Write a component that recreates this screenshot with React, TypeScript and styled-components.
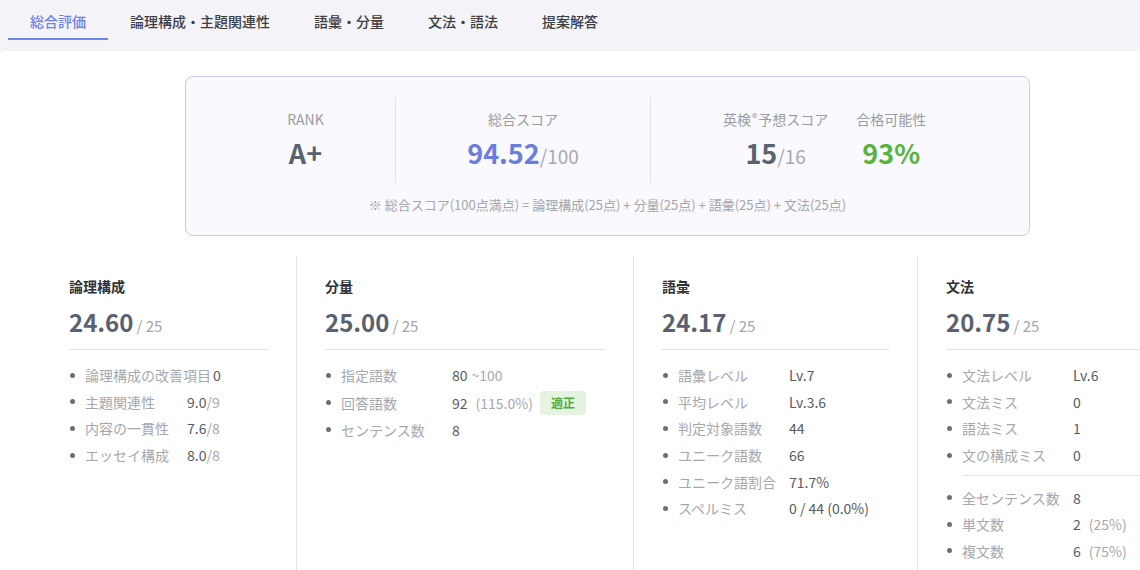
import React from "react";
import styled, { createGlobalStyle } from "styled-components";

const Global = createGlobalStyle`
  html, body { margin: 0; padding: 0; background: #f3f3f8; }
  body {
    font-family: "Noto Sans CJK JP", "Noto Sans", sans-serif;
    color: #333;
    overflow: hidden;
    width: 1140px;
    height: 570px;
  }
  * { box-sizing: border-box; }
`;

const Page = styled.div`
  display: flex;
  flex-direction: column;
  width: 1300px;
`;

const TabBar = styled.nav`
  display: flex;
  height: 51px;
  padding-left: 8px;
  background: #f3f3f8;
`;

const Tab = styled.div<{ $active?: boolean }>`
  height: 40px;
  padding: 11px 22px 0;
  font-size: 14px;
  line-height: 20px;
  font-weight: 500;
  color: ${(p) => (p.$active ? "#6d82e6" : "#3d3f45")};
  border-bottom: 2px solid ${(p) => (p.$active ? "#6d82e6" : "transparent")};
  white-space: nowrap;
`;

const Main = styled.main`
  background: #fff;
  border-top-left-radius: 4px;
  padding: 25px 0 0 41px;
  display: flex;
  flex-direction: column;
  min-height: 560px;
`;

const SummaryCard = styled.section`
  width: 845px;
  margin-left: 144px;
  border: 1px solid #c9cbf3;
  border-radius: 8px;
  background: #f9f9fe;
  padding: 20px 0 21px;
  display: flex;
  flex-direction: column;
  align-items: center;
`;

const SummaryRow = styled.div`
  display: flex;
  width: 100%;
  height: 86px;
`;

const SummarySection = styled.div<{ $width?: number; $padLeft?: number; $divider?: boolean }>`
  display: flex;
  justify-content: ${(p) => (p.$padLeft && p.$width === undefined ? "flex-start" : "center")};
  gap: 28px;
  ${(p) => (p.$width !== undefined ? `width: ${p.$width}px;` : "flex: 1;")}
  padding-left: ${(p) => p.$padLeft ?? 0}px;
  border-left: ${(p) => (p.$divider ? "1px solid #e2e2f4" : "none")};
`;

const Stat = styled.div`
  display: flex;
  flex-direction: column;
  align-items: center;
  padding-top: 12px;
`;

const StatLabel = styled.div`
  font-size: 14px;
  line-height: 20px;
  color: #9a9ca3;
  white-space: nowrap;
  sup {
    font-size: 11px;
    line-height: 0;
    vertical-align: 3px;
    margin: 0 1px;
  }
`;

const StatValue = styled.div<{ $color?: string }>`
  margin-top: 6px;
  font-size: 27px;
  line-height: 36px;
  height: 36px;
  font-weight: 700;
  color: ${(p) => p.$color ?? "#596270"};
  white-space: nowrap;
`;

const StatOf = styled.span`
  font-size: 19px;
  line-height: 1;
  font-weight: 400;
  color: #a8aab0;
`;

const Footnote = styled.div`
  margin-top: 13px;
  font-size: 13px;
  line-height: 18px;
  color: #a4a6ac;
`;

const Columns = styled.div`
  display: flex;
  margin-top: 20px;
  align-items: stretch;
`;

const Column = styled.section<{ $width: number; $divider?: boolean }>`
  width: ${(p) => p.$width}px;
  flex: none;
  padding: 20px 28px 16px;
  border-left: ${(p) => (p.$divider ? "1px solid #e3e3e6" : "none")};
`;

const ColTitle = styled.h3`
  margin: 0;
  font-size: 14px;
  line-height: 20px;
  font-weight: 700;
  color: #2f3237;
`;

const ColScore = styled.div`
  margin-top: 8px;
  font-size: 24px;
  line-height: 36px;
  height: 36px;
  font-weight: 700;
  color: #596270;
  white-space: nowrap;
`;

const ColMax = styled.span`
  font-size: 15px;
  line-height: 1;
  font-weight: 400;
  color: #a4a6ac;
  margin-left: 3px;
`;

const Rule = styled.hr`
  border: none;
  border-top: 1px solid #e3e3e6;
  margin: 9px 0 0;
`;

const List = styled.ul`
  list-style: none;
  margin: 12px 0 0;
  padding: 0;
`;

const SubRule = styled.li`
  border-top: 1px solid #e3e3e6;
  margin: 7px 0 8px 17px;
`;

const Item = styled.li`
  display: flex;
  align-items: center;
  min-height: 26.6px;
  font-size: 14px;
  line-height: 20px;
  white-space: nowrap;
`;

const Dot = styled.span`
  width: 5px;
  height: 5px;
  border-radius: 50%;
  background: #6b7078;
  margin: 0 10px 0 1px;
  flex: none;
`;

const Label = styled.span<{ $min: number }>`
  min-width: ${(p) => p.$min}px;
  color: #a6a8ae;
  margin-right: 2px;
`;

const Value = styled.span`
  color: #575c63;
`;

const Sub = styled.span<{ $gap?: number }>`
  color: #a6a8ae;
  margin-left: ${(p) => p.$gap ?? 0}px;
`;

const Badge = styled.span`
  margin: 2px 0 2px 7px;
  height: 24px;
  padding: 0 11px;
  display: inline-flex;
  align-items: center;
  border-radius: 4px;
  background: #e4f4e0;
  color: #52ad3c;
  font-size: 12px;
  font-weight: 700;
`;

type Row = { label: string; value: string; sub?: string; subGap?: number; badge?: string };

type ColData = {
  title: string;
  score: string;
  width: number;
  labelMin: number;
  divider?: boolean;
  rows: Row[];
  extra?: Row[];
};

const columns: ColData[] = [
  {
    title: "論理構成",
    score: "24.60",
    width: 255,
    labelMin: 100,
    rows: [
      { label: "論理構成の改善項目", value: "0" },
      { label: "主題関連性", value: "9.0", sub: "/9" },
      { label: "内容の一貫性", value: "7.6", sub: "/8" },
      { label: "エッセイ構成", value: "8.0", sub: "/8" },
    ],
  },
  {
    title: "分量",
    score: "25.00",
    width: 337,
    labelMin: 109,
    divider: true,
    rows: [
      { label: "指定語数", value: "80", sub: "~100", subGap: 4 },
      { label: "回答語数", value: "92", sub: "(115.0%)", subGap: 8, badge: "適正" },
      { label: "センテンス数", value: "8" },
    ],
  },
  {
    title: "語彙",
    score: "24.17",
    width: 284,
    labelMin: 109,
    divider: true,
    rows: [
      { label: "語彙レベル", value: "Lv.7" },
      { label: "平均レベル", value: "Lv.3.6" },
      { label: "判定対象語数", value: "44" },
      { label: "ユニーク語数", value: "66" },
      { label: "ユニーク語割合", value: "71.7%" },
      { label: "スペルミス", value: "0 / 44 (0.0%)" },
    ],
  },
  {
    title: "文法",
    score: "20.75",
    width: 300,
    labelMin: 109,
    divider: true,
    rows: [
      { label: "文法レベル", value: "Lv.6" },
      { label: "文法ミス", value: "0" },
      { label: "語法ミス", value: "1" },
      { label: "文の構成ミス", value: "0" },
    ],
    extra: [
      { label: "全センテンス数", value: "8" },
      { label: "単文数", value: "2", sub: "(25%)", subGap: 8 },
      { label: "複文数", value: "6", sub: "(75%)", subGap: 8 },
    ],
  },
];

const tabs = ["総合評価", "論理構成・主題関連性", "語彙・分量", "文法・語法", "提案解答"];

function renderRow(r: Row, labelMin: number, key: string) {
  return (
    <Item key={key}>
      <Dot />
      <Label $min={labelMin}>{r.label}</Label>
      <Value>{r.value}</Value>
      {r.sub && <Sub $gap={r.subGap}>{r.sub}</Sub>}
      {r.badge && <Badge>{r.badge}</Badge>}
    </Item>
  );
}

export default function App() {
  return (
    <>
      <Global />
      <Page>
        <TabBar>
          {tabs.map((t, i) => (
            <Tab key={t} $active={i === 0}>
              {t}
            </Tab>
          ))}
        </TabBar>
        <Main>
          <SummaryCard>
            <SummaryRow>
              <SummarySection $width={209} $padLeft={30}>
                <Stat>
                  <StatLabel>RANK</StatLabel>
                  <StatValue>A+</StatValue>
                </Stat>
              </SummarySection>
              <SummarySection $width={255} $divider>
                <Stat>
                  <StatLabel>総合スコア</StatLabel>
                  <StatValue $color="#6b7de0">
                    94.52<StatOf>/100</StatOf>
                  </StatValue>
                </Stat>
              </SummarySection>
              <SummarySection $padLeft={72} $divider>
                <Stat>
                  <StatLabel>
                    英検<sup>®</sup>予想スコア
                  </StatLabel>
                  <StatValue>
                    15<StatOf>/16</StatOf>
                  </StatValue>
                </Stat>
                <Stat>
                  <StatLabel>合格可能性</StatLabel>
                  <StatValue $color="#57b43a">93%</StatValue>
                </Stat>
              </SummarySection>
            </SummaryRow>
            <Footnote>
              ※ 総合スコア(100点満点) = 論理構成(25点) + 分量(25点) + 語彙(25点) + 文法(25点)
            </Footnote>
          </SummaryCard>
          <Columns>
            {columns.map((c) => (
              <Column key={c.title} $width={c.width} $divider={c.divider}>
                <ColTitle>{c.title}</ColTitle>
                <ColScore>
                  {c.score}
                  <ColMax>/ 25</ColMax>
                </ColScore>
                <Rule />
                <List>
                  {c.rows.map((r, i) => renderRow(r, c.labelMin, `r${i}`))}
                  {c.extra && <SubRule />}
                  {c.extra && c.extra.map((r, i) => renderRow(r, c.labelMin, `e${i}`))}
                </List>
              </Column>
            ))}
          </Columns>
        </Main>
      </Page>
    </>
  );
}
